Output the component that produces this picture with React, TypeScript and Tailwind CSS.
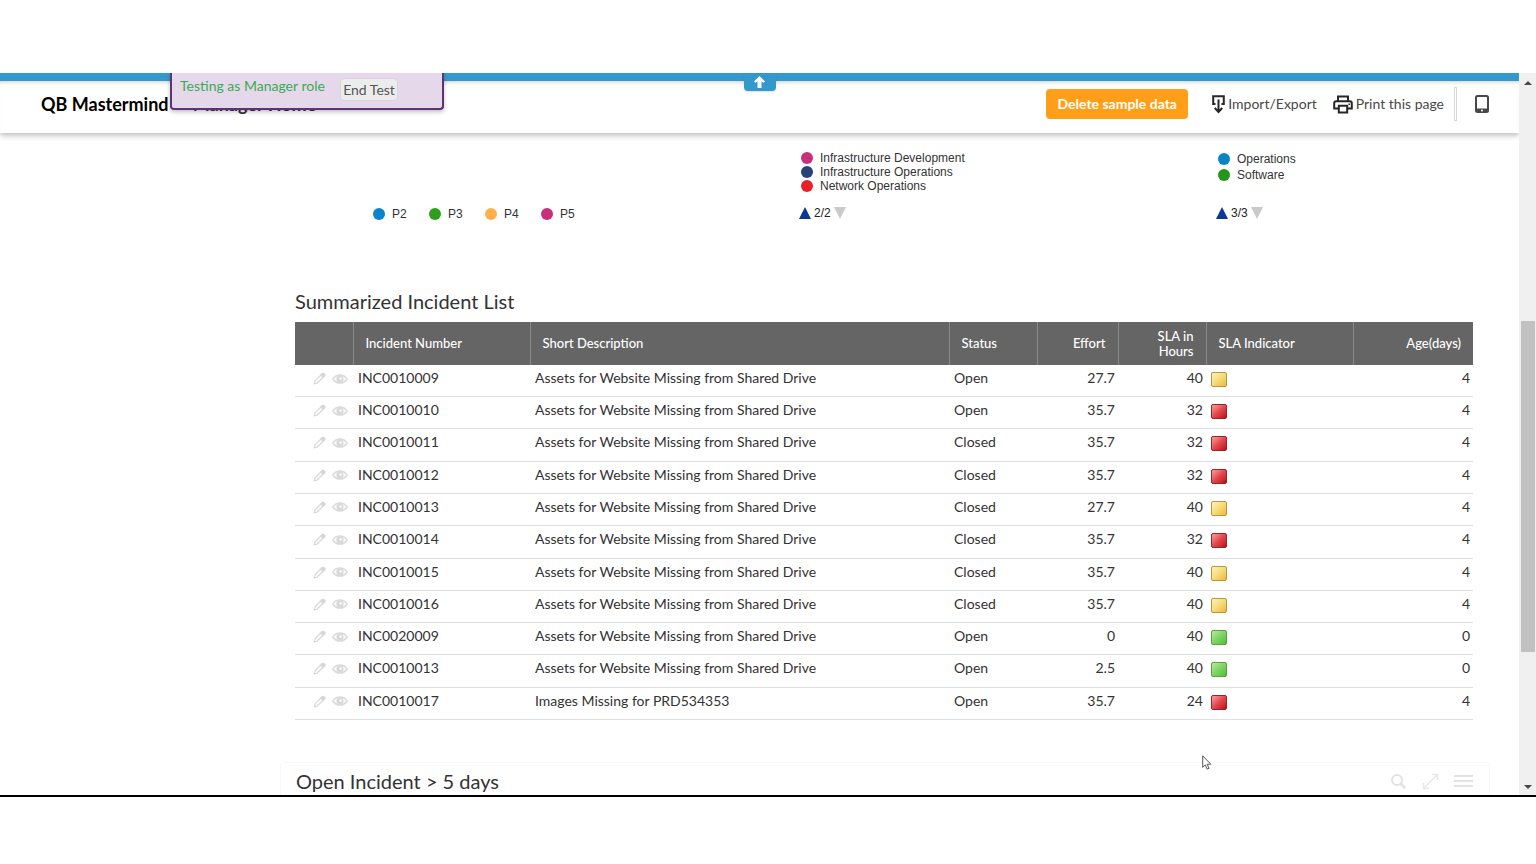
type Level = "yellow" | "red" | "green";

type Incident = {
  number: string;
  description: string;
  status: string;
  effort: string;
  sla: string;
  level: Level;
  age: string;
};

const ASSETS = "Assets for Website Missing from Shared Drive";

const incidents: Incident[] = [
  { number: "INC0010009", description: ASSETS, status: "Open", effort: "27.7", sla: "40", level: "yellow", age: "4" },
  { number: "INC0010010", description: ASSETS, status: "Open", effort: "35.7", sla: "32", level: "red", age: "4" },
  { number: "INC0010011", description: ASSETS, status: "Closed", effort: "35.7", sla: "32", level: "red", age: "4" },
  { number: "INC0010012", description: ASSETS, status: "Closed", effort: "35.7", sla: "32", level: "red", age: "4" },
  { number: "INC0010013", description: ASSETS, status: "Closed", effort: "27.7", sla: "40", level: "yellow", age: "4" },
  { number: "INC0010014", description: ASSETS, status: "Closed", effort: "35.7", sla: "32", level: "red", age: "4" },
  { number: "INC0010015", description: ASSETS, status: "Closed", effort: "35.7", sla: "40", level: "yellow", age: "4" },
  { number: "INC0010016", description: ASSETS, status: "Closed", effort: "35.7", sla: "40", level: "yellow", age: "4" },
  { number: "INC0020009", description: ASSETS, status: "Open", effort: "0", sla: "40", level: "green", age: "0" },
  { number: "INC0010013", description: ASSETS, status: "Open", effort: "2.5", sla: "40", level: "green", age: "0" },
  { number: "INC0010017", description: "Images Missing for PRD534353", status: "Open", effort: "35.7", sla: "24", level: "red", age: "4" },
];

const levelStyles: Record<Level, string> = {
  yellow: "border-[#b39a3c] from-[#fff3b8] via-[#f8da78] to-[#ecb935]",
  red: "border-[#8c2a30] from-[#ff9a9a] via-[#e2474e] to-[#c00008]",
  green: "border-[#5f9f4c] from-[#b5eb9c] via-[#7fd463] to-[#4fbf2c]",
};

function PencilIcon() {
  return (
    <svg width="13" height="13" viewBox="0 0 13 13" fill="none" stroke="#d6d6d6" strokeWidth="1.2" strokeLinejoin="round">
      <path d="M1.2 11.8 2 8.8 9.2 1.6a1.1 1.1 0 0 1 1.6 0l.7.7a1.1 1.1 0 0 1 0 1.6L4.2 11z" />
      <path d="m7.8 3 2.3 2.3 1.4-1.4a1.1 1.1 0 0 0 0-1.6l-.7-.7a1.1 1.1 0 0 0-1.6 0z" fill="#d6d6d6" />
    </svg>
  );
}

function EyeIcon() {
  return (
    <svg width="16" height="12" viewBox="0 0 16 12">
      <path d="M1 6C4.2 .6 11.8 .6 15 6 11.8 11.4 4.2 11.4 1 6z" fill="#fff" stroke="#dadada" strokeWidth="1.5" />
      <circle cx="8" cy="6" r="3.6" fill="#d8d8d8" />
      <circle cx="8.5" cy="5.5" r="1.2" fill="#fff" />
    </svg>
  );
}

function ExportIcon() {
  return (
    <svg width="13" height="19" viewBox="0 0 13 19" fill="none" stroke="#262626" strokeWidth="2">
      <path d="M3.5 9H1.2V1.2h10.6V9H9.5M6.5 4.5v12M2.8 13l3.7 4 3.7-4" />
    </svg>
  );
}

function PrinterIcon() {
  return (
    <svg width="20" height="19" viewBox="0 0 20 19" fill="none" stroke="#262626" strokeWidth="2">
      <path d="M5 6V1.5h10V6M5 13.5H1.2V8.3C1.2 7 2 6.2 3.3 6.2h13.4c1.3 0 2.1.8 2.1 2.1v5.2H15" />
      <path d="M5.8 10.8h8.4v6.7H5.8z" />
      <path d="M15.5 9.2h1.5" strokeWidth="1.5" />
    </svg>
  );
}

function TabletIcon() {
  return (
    <svg width="14" height="18" viewBox="0 0 14 18">
      <rect x="1" y="1" width="12" height="16" rx="1.5" fill="#fff" stroke="#484848" strokeWidth="2" />
      <path d="M1 13.5h12V17H1z" fill="#484848" />
      <circle cx="7" cy="15.4" r="1" fill="#fff" />
    </svg>
  );
}

function Dot({ color }: { color: string }) {
  return (
    <svg width="12" height="12" viewBox="0 0 12 12" className="shrink-0">
      <circle cx="6" cy="6" r="6" fill={color} />
    </svg>
  );
}

function Pager({ label }: { label: string }) {
  return (
    <div className="-ml-[2px] flex h-4 items-center gap-[3px] text-xs text-[#222]">
      <button aria-label="Previous legend page">
        <svg width="12" height="12" viewBox="0 0 12 12">
          <path d="M6 0 12 12H0z" fill="#0b3896" />
        </svg>
      </button>
      <span>{label}</span>
      <button aria-label="Next legend page">
        <svg width="12" height="12" viewBox="0 0 12 12">
          <path d="M0 0h12L6 12z" fill="#cacaca" />
        </svg>
      </button>
    </div>
  );
}

function Header() {
  return (
    <header className="relative z-10 shrink-0 border-t-8 border-[#3399cc] bg-white shadow-[0_2px_6px_rgba(0,0,0,0.3)]">
      <div className="flex h-[52px] items-center pr-[29px] pl-[41px] shadow-[inset_0_4px_4px_-3px_rgba(0,0,0,0.2)]">
        <h1 className="flex-1 pb-[6px] text-lg font-bold whitespace-pre text-black">
          QB Mastermind <span className="text-[#333]">  - Manager Home</span>
        </h1>
        <div className="flex items-center pb-[6px] text-sm text-[#484848]">
          <button className="h-[30px] w-[142px] rounded bg-[#ff9f19] text-sm font-bold text-white">Delete sample data</button>
          <button className="ml-6 flex items-center gap-[3px]">
            <ExportIcon />
            Import/Export
          </button>
          <button className="ml-4 flex items-center gap-[3px]">
            <PrinterIcon />
            Print this page
          </button>
          <span className="ml-[10px] h-[34px] w-[3px] border border-[#d8d8d8]" />
          <button aria-label="Mobile view" className="ml-[17px] px-px">
            <TabletIcon />
          </button>
        </div>
      </div>
      <button aria-label="Collapse header" className="absolute -top-1 left-1/2 flex h-[14px] w-8 -translate-x-1/2 items-center justify-center rounded-b bg-[#3399cc] shadow-sm">
        <svg width="11" height="12" viewBox="0 0 11 12" className="-mt-1">
          <path d="M5.5 0 11 5.5 9.5 6.8 7.5 5.5V12h-4V5.5l-2 1.3L0 5.5z" fill="#fff" />
        </svg>
      </button>
      <div className="absolute -top-2 left-[170px] flex h-[37px] w-[274px] items-start rounded-b border-2 border-t-0 border-[#5c3474] bg-[#e5d8ea] pl-2 shadow-[0_2px_4px_rgba(0,0,0,0.25)]">
        <span className="pt-[3px] text-sm leading-5 text-[#3bab55]">Testing as Manager role</span>
        <button className="absolute top-[5px] left-[168px] h-[23px] w-[58px] rounded border border-[#d8d4da] bg-[#ececec] text-sm leading-5 text-[#555]">End Test</button>
      </div>
    </header>
  );
}

function Legends() {
  return (
    <section className="grid grid-cols-[428px_417px_1fr] pt-[18px] pl-[373px] font-['Liberation_Sans',Arial,sans-serif] text-xs text-[#333]">
      <ul className="flex pt-[55px] leading-4">
        <li className="flex w-14 items-center gap-[7px]"><Dot color="#0b84cb" />P2</li>
        <li className="flex w-14 items-center gap-[7px]"><Dot color="#2ca01c" />P3</li>
        <li className="flex w-14 items-center gap-[7px]"><Dot color="#ffb04a" />P4</li>
        <li className="flex w-14 items-center gap-[7px]"><Dot color="#c9307c" />P5</li>
      </ul>
      <div className="flex h-[70px] flex-col justify-between">
        <ul className="leading-[14px]">
          <li className="flex items-center gap-[7px]"><Dot color="#c9307c" />Infrastructure Development</li>
          <li className="flex items-center gap-[7px]"><Dot color="#24427c" />Infrastructure Operations</li>
          <li className="flex items-center gap-[7px]"><Dot color="#e8202a" />Network Operations</li>
        </ul>
        <Pager label="2/2" />
      </div>
      <div className="flex h-[70px] flex-col justify-between">
        <ul className="leading-4">
          <li className="flex items-center gap-[7px]"><Dot color="#0b84c4" />Operations</li>
          <li className="flex items-center gap-[7px]"><Dot color="#26961a" />Software</li>
        </ul>
        <Pager label="3/3" />
      </div>
    </section>
  );
}

function IncidentTable() {
  const head = "border-l border-[#8a8a8a] px-3 font-medium";
  return (
    <section className="mt-[67px] mr-[46px] ml-[295px]">
      <h2 className="text-xl leading-6 text-[#333]">Summarized Incident List</h2>
      <table className="mt-[9px] h-[398px] w-full table-fixed border-collapse">
        <colgroup>
          <col className="w-[58px]" />
          <col className="w-[177px]" />
          <col />
          <col className="w-[88px]" />
          <col className="w-[81px]" />
          <col className="w-[88px]" />
          <col className="w-[147px]" />
          <col className="w-[120px]" />
        </colgroup>
        <thead>
          <tr className="h-[43px] bg-[#656565] text-left text-[13px] leading-[15px] text-white">
            <th aria-label="Actions" />
            <th className={head}>Incident Number</th>
            <th className={head}>Short Description</th>
            <th className={head}>Status</th>
            <th className={`${head} text-right`}>Effort</th>
            <th className={`${head} text-right`}>SLA in<br />Hours</th>
            <th className={head}>SLA Indicator</th>
            <th className={`${head} text-right`}>Age(days)</th>
          </tr>
        </thead>
        <tbody className="text-sm leading-5 text-[#333]">
          {incidents.map((row, i) => (
            <tr key={i} className="border-b border-[#dcdfe1] align-top">
              <td className="pt-[7px]">
                <div className="flex items-center justify-end gap-[6px] pr-[5px]">
                  <button aria-label={`Edit ${row.number}`}><PencilIcon /></button>
                  <button aria-label={`View ${row.number}`}><EyeIcon /></button>
                </div>
              </td>
              <td className="pt-[3px] pl-[5px]">{row.number}</td>
              <td className="pt-[3px] pl-[5px]">{row.description}</td>
              <td className="pt-[3px] pl-[5px]">{row.status}</td>
              <td className="pt-[3px] pr-[3px] text-right">{row.effort}</td>
              <td className="pt-[3px] pr-[3px] text-right">{row.sla}</td>
              <td className="pt-[7px] pl-[5px]">
                <span role="img" aria-label={row.level} className={`block h-[15px] w-4 rounded-[2px] border bg-linear-to-br ${levelStyles[row.level]}`} />
              </td>
              <td className="pt-[3px] pr-[3px] text-right">{row.age}</td>
            </tr>
          ))}
        </tbody>
      </table>
    </section>
  );
}

function OpenIncidents() {
  return (
    <section className="mt-[42px] mr-[29px] ml-[280px] flex h-20 items-start justify-between rounded border border-[#f8f8f8] pt-[6px] pr-4 pl-[15px]">
      <h2 className="text-xl leading-6 text-[#333]">Open Incident &gt; 5 days</h2>
      <div className="flex gap-[15px] pt-1">
        <button aria-label="Search">
          <svg width="17" height="17" viewBox="0 0 17 17" fill="none" stroke="#e2e2e2" strokeWidth="2">
            <circle cx="7" cy="7" r="5" />
            <path d="m10.5 10.5 4.5 4.5" strokeWidth="3" />
          </svg>
        </button>
        <button aria-label="Expand">
          <svg width="17" height="17" viewBox="0 0 17 17" fill="none" stroke="#e8e8e8" strokeWidth="1.5">
            <path d="M1.5 15.5l14-14M10 1.5h5.5V7M7 15.5H1.5V10" />
          </svg>
        </button>
        <button aria-label="Menu">
          <svg width="19" height="17" viewBox="0 0 19 17" stroke="#e2e2e2" strokeWidth="2">
            <path d="M0 3h19M0 8h19M0 13h19" />
          </svg>
        </button>
      </div>
    </section>
  );
}

function ScrollTrack() {
  return (
    <div className="flex w-[17px] shrink-0 flex-col items-center bg-[#f0f0f0]">
      <svg width="16" height="17" viewBox="0 0 16 17"><path d="m8 8 4 4H4z" fill="#484848" /></svg>
      <div className="flex-[231]" />
      <div className="w-[14px] flex-[332] bg-[#c1c1c1]" />
      <div className="flex-[126]" />
      <svg width="16" height="17" viewBox="0 0 16 17"><path d="m8 11 4-4H4z" fill="#484848" /></svg>
    </div>
  );
}

export default function App() {
  return (
    <div className="flex h-screen flex-col bg-white pt-[73px] pb-[67px] font-[Lato,'Noto_Sans',sans-serif]">
      <div className="relative flex min-h-0 flex-1 overflow-hidden border-b-2 border-black">
        <div className="flex min-w-0 flex-1 flex-col overflow-hidden">
          <Header />
          <main className="min-h-0 flex-1 overflow-hidden">
            <Legends />
            <IncidentTable />
            <OpenIncidents />
          </main>
        </div>
        <ScrollTrack />
        <svg className="absolute top-[682px] left-[1202px]" width="10" height="15" viewBox="0 0 10 15">
          <path d="M.7.8v11.600l2.600-2.500 1.800 4.200 1.900-.8-1.800-4.100h3.600z" fill="#fff" stroke="#555" />
        </svg>
      </div>
    </div>
  );
}
